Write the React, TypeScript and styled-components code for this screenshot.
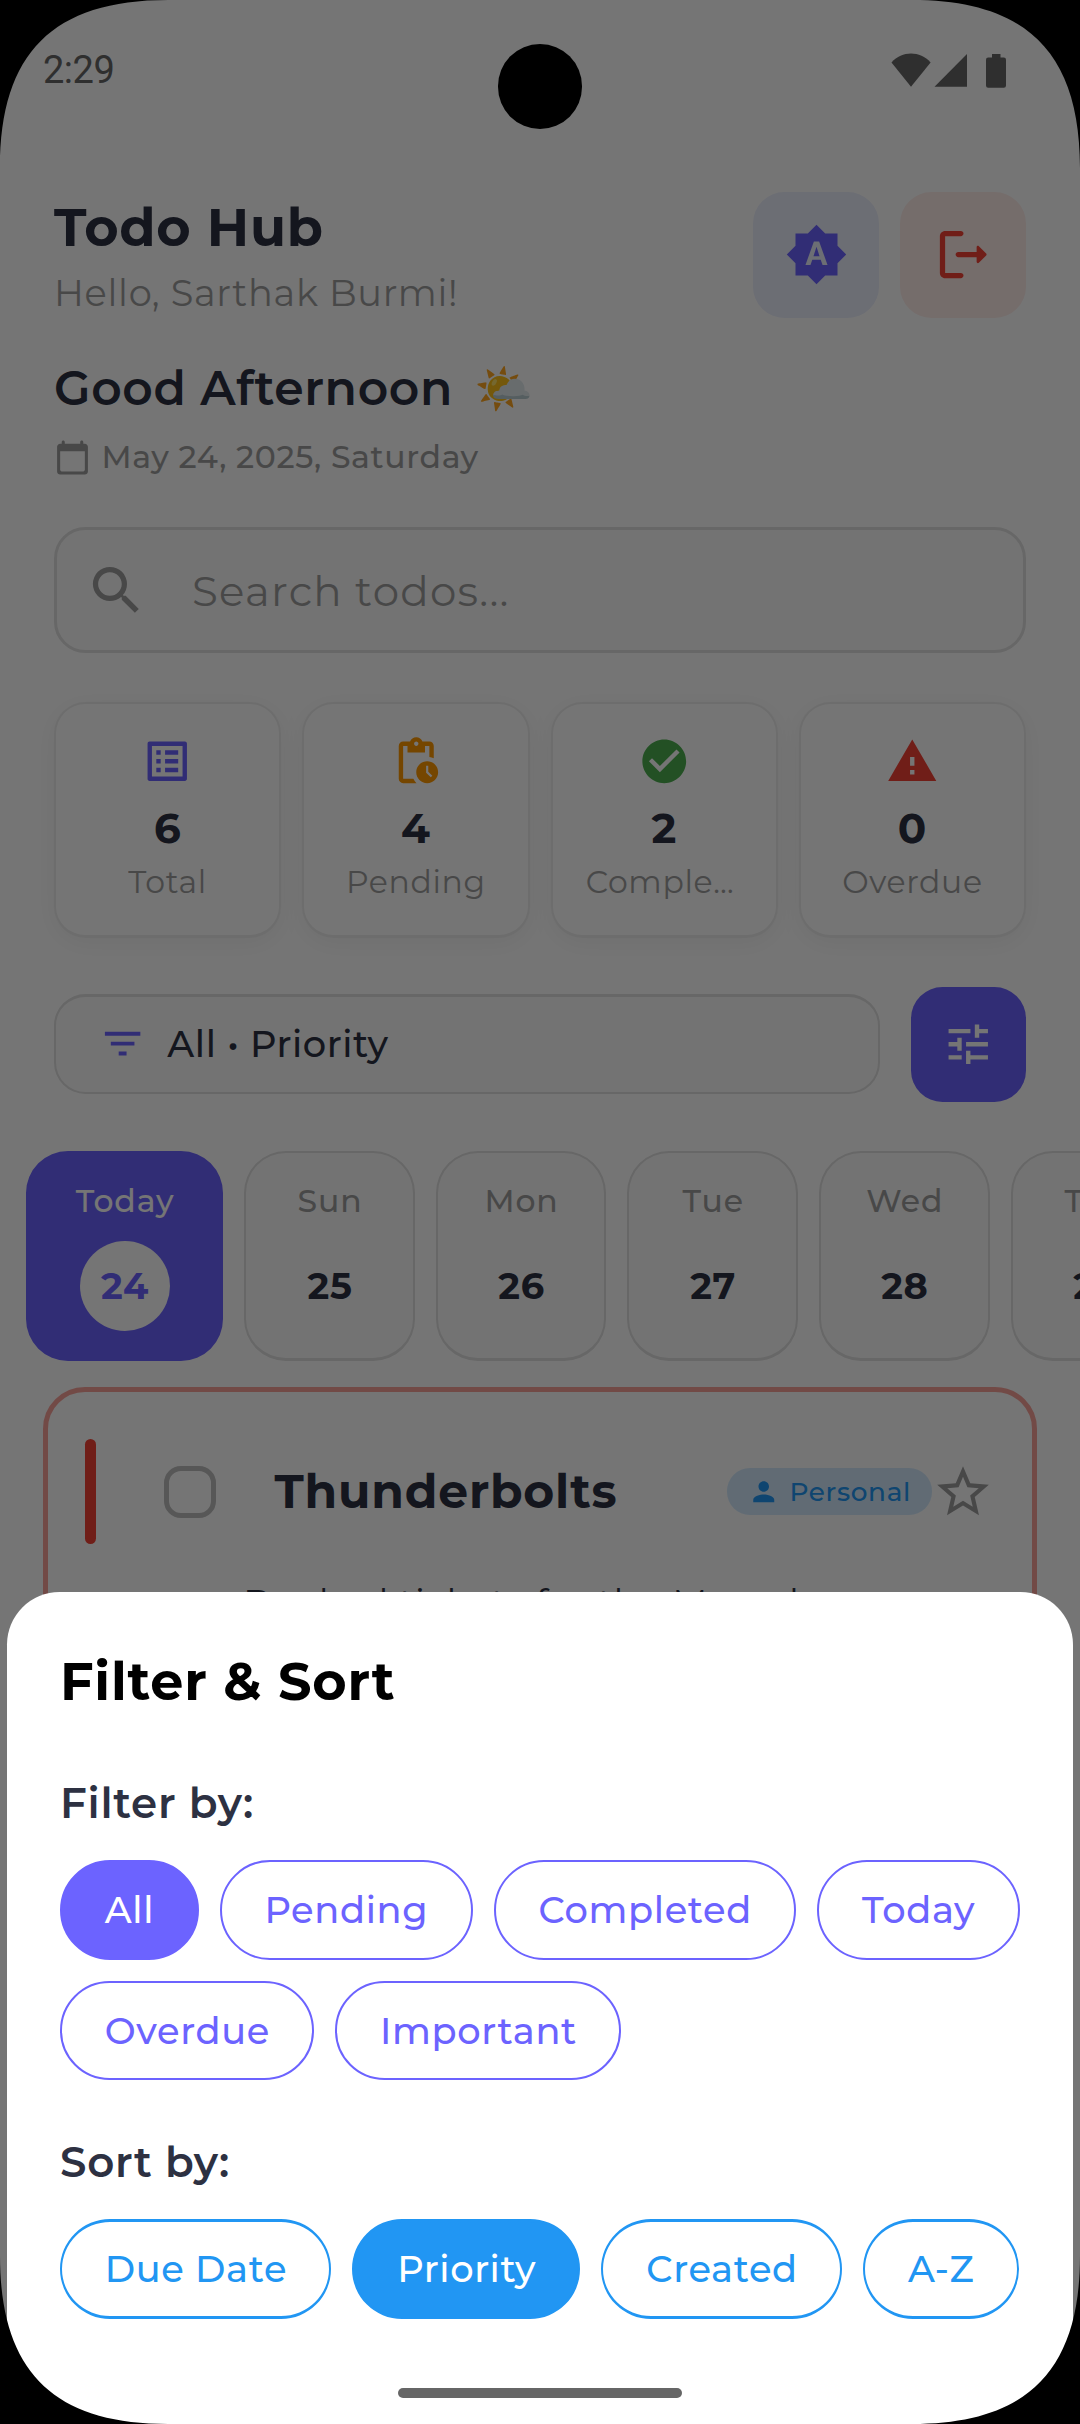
import React from "react";
import styled, { createGlobalStyle, css } from "styled-components";
import {
  MdBrightnessAuto,
  MdCheckCircle,
  MdFilterList,
  MdListAlt,
  MdPendingActions,
  MdPerson,
  MdSearch,
  MdStarBorder,
  MdTune,
  MdWarning,
} from "react-icons/md";

const color = {
  primary: "#6c63ff",
  blue: "#2196f3",
  red: "#f44336",
  orange: "#ff9800",
  green: "#4caf50",
  ink: "#2d3142",
  grey: "#9e9e9e",
  line: "#e0e0e0",
  field: "#fbfbfb",
  white: "#ffffff",
};

const GlobalStyle = createGlobalStyle`
  * { box-sizing: border-box; }
  body { margin: 0; background: #000; }
  svg { display: block; flex: none; }
`;

const Phone = styled.div`
  position: relative;
  width: 1080px;
  height: 2424px;
  overflow: hidden;
  background: ${color.white};
  font-family: Montserrat, Inter, "Open Sans", sans-serif;
  letter-spacing: 0.66px;
  color: ${color.ink};
  white-space: nowrap;
`;

/* ---------- Status bar ---------- */

const StatusBar = styled.header`
  display: flex;
  align-items: center;
  justify-content: space-between;
  height: 141px;
  padding: 0 74px 0 43px;
`;

const Clock = styled.span`
  font: 400 38px/44px Roboto, sans-serif;
  letter-spacing: -0.5px;
  color: #666;
  padding-bottom: 1px;
`;

/* ---------- Page ---------- */

const Page = styled.main`
  display: flex;
  flex-direction: column;
  padding-top: 51px;
`;

const Header = styled.section`
  display: flex;
  align-items: center;
  gap: 21px;
  height: 126px;
  margin: 0 54px;
`;

const Titles = styled.div`
  flex: 1;
  display: flex;
  flex-direction: column;
  gap: 10.5px;
`;

const AppTitle = styled.h1`
  margin: 0;
  font-size: 52.5px;
  font-weight: 700;
  line-height: 64px;
`;

const Hello = styled.p`
  margin: 0;
  font-size: 36.75px;
  line-height: 45px;
  letter-spacing: 0.7px;
  color: ${color.grey};
`;

const SquareButton = styled.button<{ $size: number; $bg: string; $fg: string }>`
  display: flex;
  align-items: center;
  justify-content: center;
  flex: none;
  width: ${(p) => p.$size}px;
  height: ${(p) => p.$size}px;
  padding: 0 0 1px;
  border: 0;
  border-radius: 31.5px;
  background: ${(p) => p.$bg};
  color: ${(p) => p.$fg};
`;

const Greeting = styled.h2`
  height: 58px;
  margin: 41px 54px 0;
  font-size: 47.25px;
  font-weight: 600;
  line-height: 58px;
`;

const Weather = styled.span`
  margin-left: 7px;
`;

const DateRow = styled.div`
  display: flex;
  align-items: center;
  gap: 10.5px;
  height: 38px;
  margin: 21px 54px 0;
  font-size: 31.5px;
  font-weight: 500;
  line-height: 38px;
  color: ${color.grey};
`;

const SearchField = styled.div`
  display: flex;
  align-items: center;
  gap: 44px;
  height: 126px;
  margin: 51px 54px 0;
  padding: 1px 0 0 28px;
  border: 3px solid ${color.line};
  border-radius: 31.5px;
  background: ${color.field};
  font-size: 42px;
  letter-spacing: 1.25px;
  color: ${color.grey};
`;

const Stats = styled.section`
  display: grid;
  grid-template-columns: repeat(4, 1fr);
  gap: 21px;
  height: 236px;
  margin: 49px 54px 0;
`;

const StatCard = styled.article`
  display: flex;
  flex-direction: column;
  align-items: center;
  padding-top: 31px;
  border: 2px solid #eeeeee;
  border-bottom-width: 3px;
  border-radius: 31.5px;
  background: ${color.white};
  box-shadow: 0 5px 26px rgba(0, 0, 0, 0.05);
`;

const StatIcon = styled.div<{ $color: string }>`
  color: ${(p) => p.$color};
`;

const StatValue = styled.strong`
  margin-top: 15.5px;
  font-size: 42px;
  font-weight: 700;
  line-height: 51px;
`;

const StatLabel = styled.span`
  max-width: 157px;
  margin-top: 9px;
  overflow: hidden;
  font-size: 31.5px;
  line-height: 38px;
  text-overflow: ellipsis;
  color: ${color.grey};
`;

const FilterRow = styled.section`
  display: flex;
  align-items: center;
  gap: 31px;
  height: 115px;
  margin: 49px 54px 0;
`;

const FilterField = styled.div`
  flex: 1;
  display: flex;
  align-items: center;
  gap: 21px;
  height: 100px;
  margin-bottom: 2px;
  padding: 0 0 1px 43px;
  border: 2px solid ${color.line};
  border-top-width: 3px;
  border-radius: 31.5px;
  background: ${color.field};
  font-size: 36.75px;
  font-weight: 500;
`;

/* ---------- Day strip ---------- */

const DayStrip = styled.section`
  display: flex;
  gap: 21px;
  height: 210px;
  margin-top: 49px;
  padding-left: 26px;
  overflow: hidden;
`;

const DayCard = styled.div<{ $active?: boolean }>`
  display: flex;
  flex-direction: column;
  align-items: center;
  flex: none;
  gap: 21px;
  width: ${(p) => (p.$active ? 197.2 : 170.6)}px;
  padding-top: 29px;
  border: 2px solid ${(p) => (p.$active ? color.primary : color.line)};
  border-bottom-width: 3px;
  border-radius: 42px;
  background: ${(p) => (p.$active ? color.primary : color.field)};
`;

const DayName = styled.span<{ $active?: boolean }>`
  padding-left: 1px;
  font-size: 31.5px;
  font-weight: 500;
  line-height: 38px;
  letter-spacing: 0.9px;
  color: ${(p) => (p.$active ? color.white : color.grey)};
`;

const DayNumber = styled.span<{ $active?: boolean }>`
  display: flex;
  align-items: center;
  justify-content: center;
  width: 90px;
  height: 90px;
  padding: 0 0 1px 1px;
  border-radius: 50%;
  font-size: 36.75px;
  font-weight: 700;
  ${(p) =>
    p.$active &&
    css`
      background: ${color.white};
      color: ${color.primary};
    `}
`;

/* ---------- Todo card ---------- */

const TodoCard = styled.article`
  height: 400px;
  margin: 26px 43px 0;
  padding: 47px 38px 0 37px;
  border: 5px solid rgba(244, 67, 54, 0.5);
  border-radius: 42px;
`;

const TodoRow = styled.div`
  display: flex;
  align-items: center;
  height: 105px;
`;

const PriorityBar = styled.span`
  width: 11px;
  height: 105px;
  border-radius: 5.5px;
  background: ${color.red};
`;

const Checkbox = styled.span`
  width: 52px;
  height: 52px;
  margin-left: 68px;
  border: 5px solid #bdbdbd;
  border-radius: 17px;
`;

const TodoTitle = styled.h3`
  flex: 1;
  margin: 0 0 0 58.5px;
  padding-bottom: 2px;
  font-size: 47.25px;
  font-weight: 700;
  line-height: 58px;
  letter-spacing: 0.8px;
`;

const CategoryTag = styled.span`
  display: flex;
  align-items: center;
  gap: 10.5px;
  height: 47px;
  padding: 0 21px;
  border-radius: 23px;
  background: rgba(33, 150, 243, 0.2);
  color: ${color.blue};
  font-size: 26.25px;
  font-weight: 500;
`;

const StarSlot = styled.span`
  color: ${color.grey};
`;

const TodoText = styled.p`
  margin: 36px 0 0 158px;
  font-size: 36.75px;
  line-height: 45px;
`;

/* ---------- Modal layer ---------- */

const Scrim = styled.div`
  position: absolute;
  inset: 0;
  background: rgba(0, 0, 0, 0.54);
`;

const Sheet = styled.section`
  position: absolute;
  left: 7px;
  right: 7px;
  top: 1592px;
  bottom: 0;
  padding: 57px 53px 0;
  border-radius: 52.5px 52.5px 0 0;
  background: ${color.white};
`;

const SheetTitle = styled.h2`
  margin: 0;
  font-size: 52.5px;
  font-weight: 700;
  line-height: 64px;
  letter-spacing: 0.8px;
  color: #000;
`;

const GroupTitle = styled.h3<{ $gap: number }>`
  margin: ${(p) => p.$gap}px 0 31px;
  font-size: 42px;
  font-weight: 600;
  line-height: 51px;
  letter-spacing: 0.75px;
`;

const ChipRow = styled.div`
  display: flex;
  flex-wrap: wrap;
  gap: 21px;
  margin-right: -6px;
`;

const Chip = styled.button<{ $tone: string; $thick?: boolean; $active?: boolean }>`
  height: 99.5px;
  padding: 0 42.4px 0 42.8px;
  border: solid ${(p) => p.$tone};
  border-width: ${(p) => (p.$thick ? "3px 2px" : "2px")};
  border-radius: 52.5px;
  background: ${(p) => (p.$active ? p.$tone : "transparent")};
  color: ${(p) => (p.$active ? color.white : p.$tone)};
  font-family: inherit;
  font-size: 36.75px;
  font-weight: 500;
  letter-spacing: inherit;
`;

/* ---------- Device frame ---------- */

const Camera = styled.div`
  position: absolute;
  left: 497.5px;
  top: 44px;
  width: 84.5px;
  height: 84.5px;
  border-radius: 50%;
  background: #000;
`;

const HomeBar = styled.div`
  position: absolute;
  left: 398px;
  bottom: 26px;
  width: 284px;
  height: 10px;
  border-radius: 5px;
  background: #666;
`;

const Bezel = styled.svg`
  position: absolute;
  inset: 0;
`;

/* ---------- Drawings ---------- */

const StatusIcons = () => (
  <svg width="115" height="36" viewBox="0 0 115 36" fill="#666">
    <path d="M0.5 9.5C11 -2.4 29 -2.4 39.6 9.5L20 33.7Z" />
    <path d="M76 1V33.7H43.5Z" />
    <path d="M101 1h8.500v3.600h3.300a2.200 2.200 0 0 1 2.200 2.200v25.800a2.200 2.200 0 0 1-2.200 2.200h-15.600a2.200 2.200 0 0 1-2.200-2.200v-25.800a2.200 2.200 0 0 1 2.200-2.200h3.800z" />
  </svg>
);

const CalendarIcon = () => (
  <svg width="37" height="37" viewBox="0 0 24 24" fill="currentColor">
    <path d="M20 3h-1V2c0-.55-.45-1-1-1s-1 .45-1 1v1H7V2c0-.55-.45-1-1-1s-1 .45-1 1v1H4c-1.100 0-2 .9-2 2v16c0 1.100.9 2 2 2h16c1.100 0 2-.9 2-2V5c0-1.100-.9-2-2-2zm-1 18H5c-.55 0-1-.45-1-1V8h16v12c0 .55-.45 1-1 1z" />
  </svg>
);

const LogoutIcon = () => (
  <svg width="63" height="63" viewBox="0 0 24 24" fill="currentColor">
    <path d="M5 5h6c.55 0 1-.45 1-1s-.45-1-1-1H5c-1.100 0-2 .9-2 2v14c0 1.100.9 2 2 2h6c.55 0 1-.45 1-1s-.45-1-1-1H5V5z" />
    <path d="M20.650 11.650l-2.790-2.790c-.32-.32-.86-.1-.86.35V11h-7c-.55 0-1 .45-1 1s.45 1 1 1h7v1.790c0 .45.54.67.85.35l2.790-2.790c.2-.19.2-.51.010-.7z" />
  </svg>
);

const corner = "M0 0H168C53 0 0 53 0 168Z";

const stats = [
  { icon: MdListAlt, tone: color.primary, value: 6, label: "Total" },
  { icon: MdPendingActions, tone: color.orange, value: 4, label: "Pending" },
  { icon: MdCheckCircle, tone: color.green, value: 2, label: "Completed" },
  { icon: MdWarning, tone: color.red, value: 0, label: "Overdue" },
];

const days = [
  { name: "Today", number: 24, active: true },
  { name: "Sun", number: 25 },
  { name: "Mon", number: 26 },
  { name: "Tue", number: 27 },
  { name: "Wed", number: 28 },
  { name: "Thu", number: 29 },
];

const filters = ["All", "Pending", "Completed", "Today", "Overdue", "Important"];
const sorts = ["Due Date", "Priority", "Created", "A-Z"];

export default function App() {
  return (
    <>
      <GlobalStyle />
      <Phone>
        <StatusBar>
          <Clock>2:29</Clock>
          <StatusIcons />
        </StatusBar>

        <Page>
          <Header>
            <Titles>
              <AppTitle>Todo Hub</AppTitle>
              <Hello>Hello, Sarthak Burmi!</Hello>
            </Titles>
            <SquareButton $size={126} $bg="#ebeffd" $fg={color.primary}>
              <MdBrightnessAuto size={63} />
            </SquareButton>
            <SquareButton $size={126} $bg="#ffedea" $fg={color.red}>
              <LogoutIcon />
            </SquareButton>
          </Header>

          <Greeting>
            Good Afternoon <Weather>🌤️</Weather>
          </Greeting>
          <DateRow>
            <CalendarIcon />
            May 24, 2025, Saturday
          </DateRow>

          <SearchField>
            <MdSearch size={63} />
            Search todos...
          </SearchField>

          <Stats>
            {stats.map(({ icon: Icon, tone, value, label }) => (
              <StatCard key={label}>
                <StatIcon $color={tone}>
                  <Icon size={52.5} />
                </StatIcon>
                <StatValue>{value}</StatValue>
                <StatLabel>{label}</StatLabel>
              </StatCard>
            ))}
          </Stats>

          <FilterRow>
            <FilterField>
              <MdFilterList size={47.25} color={color.primary} />
              All • Priority
            </FilterField>
            <SquareButton $size={115.5} $bg={color.primary} $fg={color.white}>
              <MdTune size={52.5} />
            </SquareButton>
          </FilterRow>

          <DayStrip>
            {days.map((d) => (
              <DayCard key={d.name} $active={d.active}>
                <DayName $active={d.active}>{d.name}</DayName>
                <DayNumber $active={d.active}>{d.number}</DayNumber>
              </DayCard>
            ))}
          </DayStrip>

          <TodoCard>
            <TodoRow>
              <PriorityBar />
              <Checkbox />
              <TodoTitle>Thunderbolts</TodoTitle>
              <CategoryTag>
                <MdPerson size={31.5} />
                Personal
              </CategoryTag>
              <StarSlot>
                <MdStarBorder size={62} />
              </StarSlot>
            </TodoRow>
            <TodoText>Booked tickets for the Marvel</TodoText>
          </TodoCard>
        </Page>

        <Scrim />

        <Sheet>
          <SheetTitle>Filter &amp; Sort</SheetTitle>
          <GroupTitle $gap={65}>Filter by:</GroupTitle>
          <ChipRow>
            {filters.map((f) => (
              <Chip key={f} $tone={color.primary} $active={f === "All"}>
                {f}
              </Chip>
            ))}
          </ChipRow>
          <GroupTitle $gap={57}>Sort by:</GroupTitle>
          <ChipRow>
            {sorts.map((s) => (
              <Chip key={s} $tone={color.blue} $thick $active={s === "Priority"}>
                {s}
              </Chip>
            ))}
          </ChipRow>
        </Sheet>

        <HomeBar />
        <Camera />
        <Bezel width="1080" height="2424" viewBox="0 0 1080 2424">
          <path d={corner} />
          <path d={corner} transform="translate(1080 0) scale(-1 1)" />
          <path d={corner} transform="translate(0 2424) scale(1 -1)" />
          <path d={corner} transform="translate(1080 2424) scale(-1 -1)" />
        </Bezel>
      </Phone>
    </>
  );
}
